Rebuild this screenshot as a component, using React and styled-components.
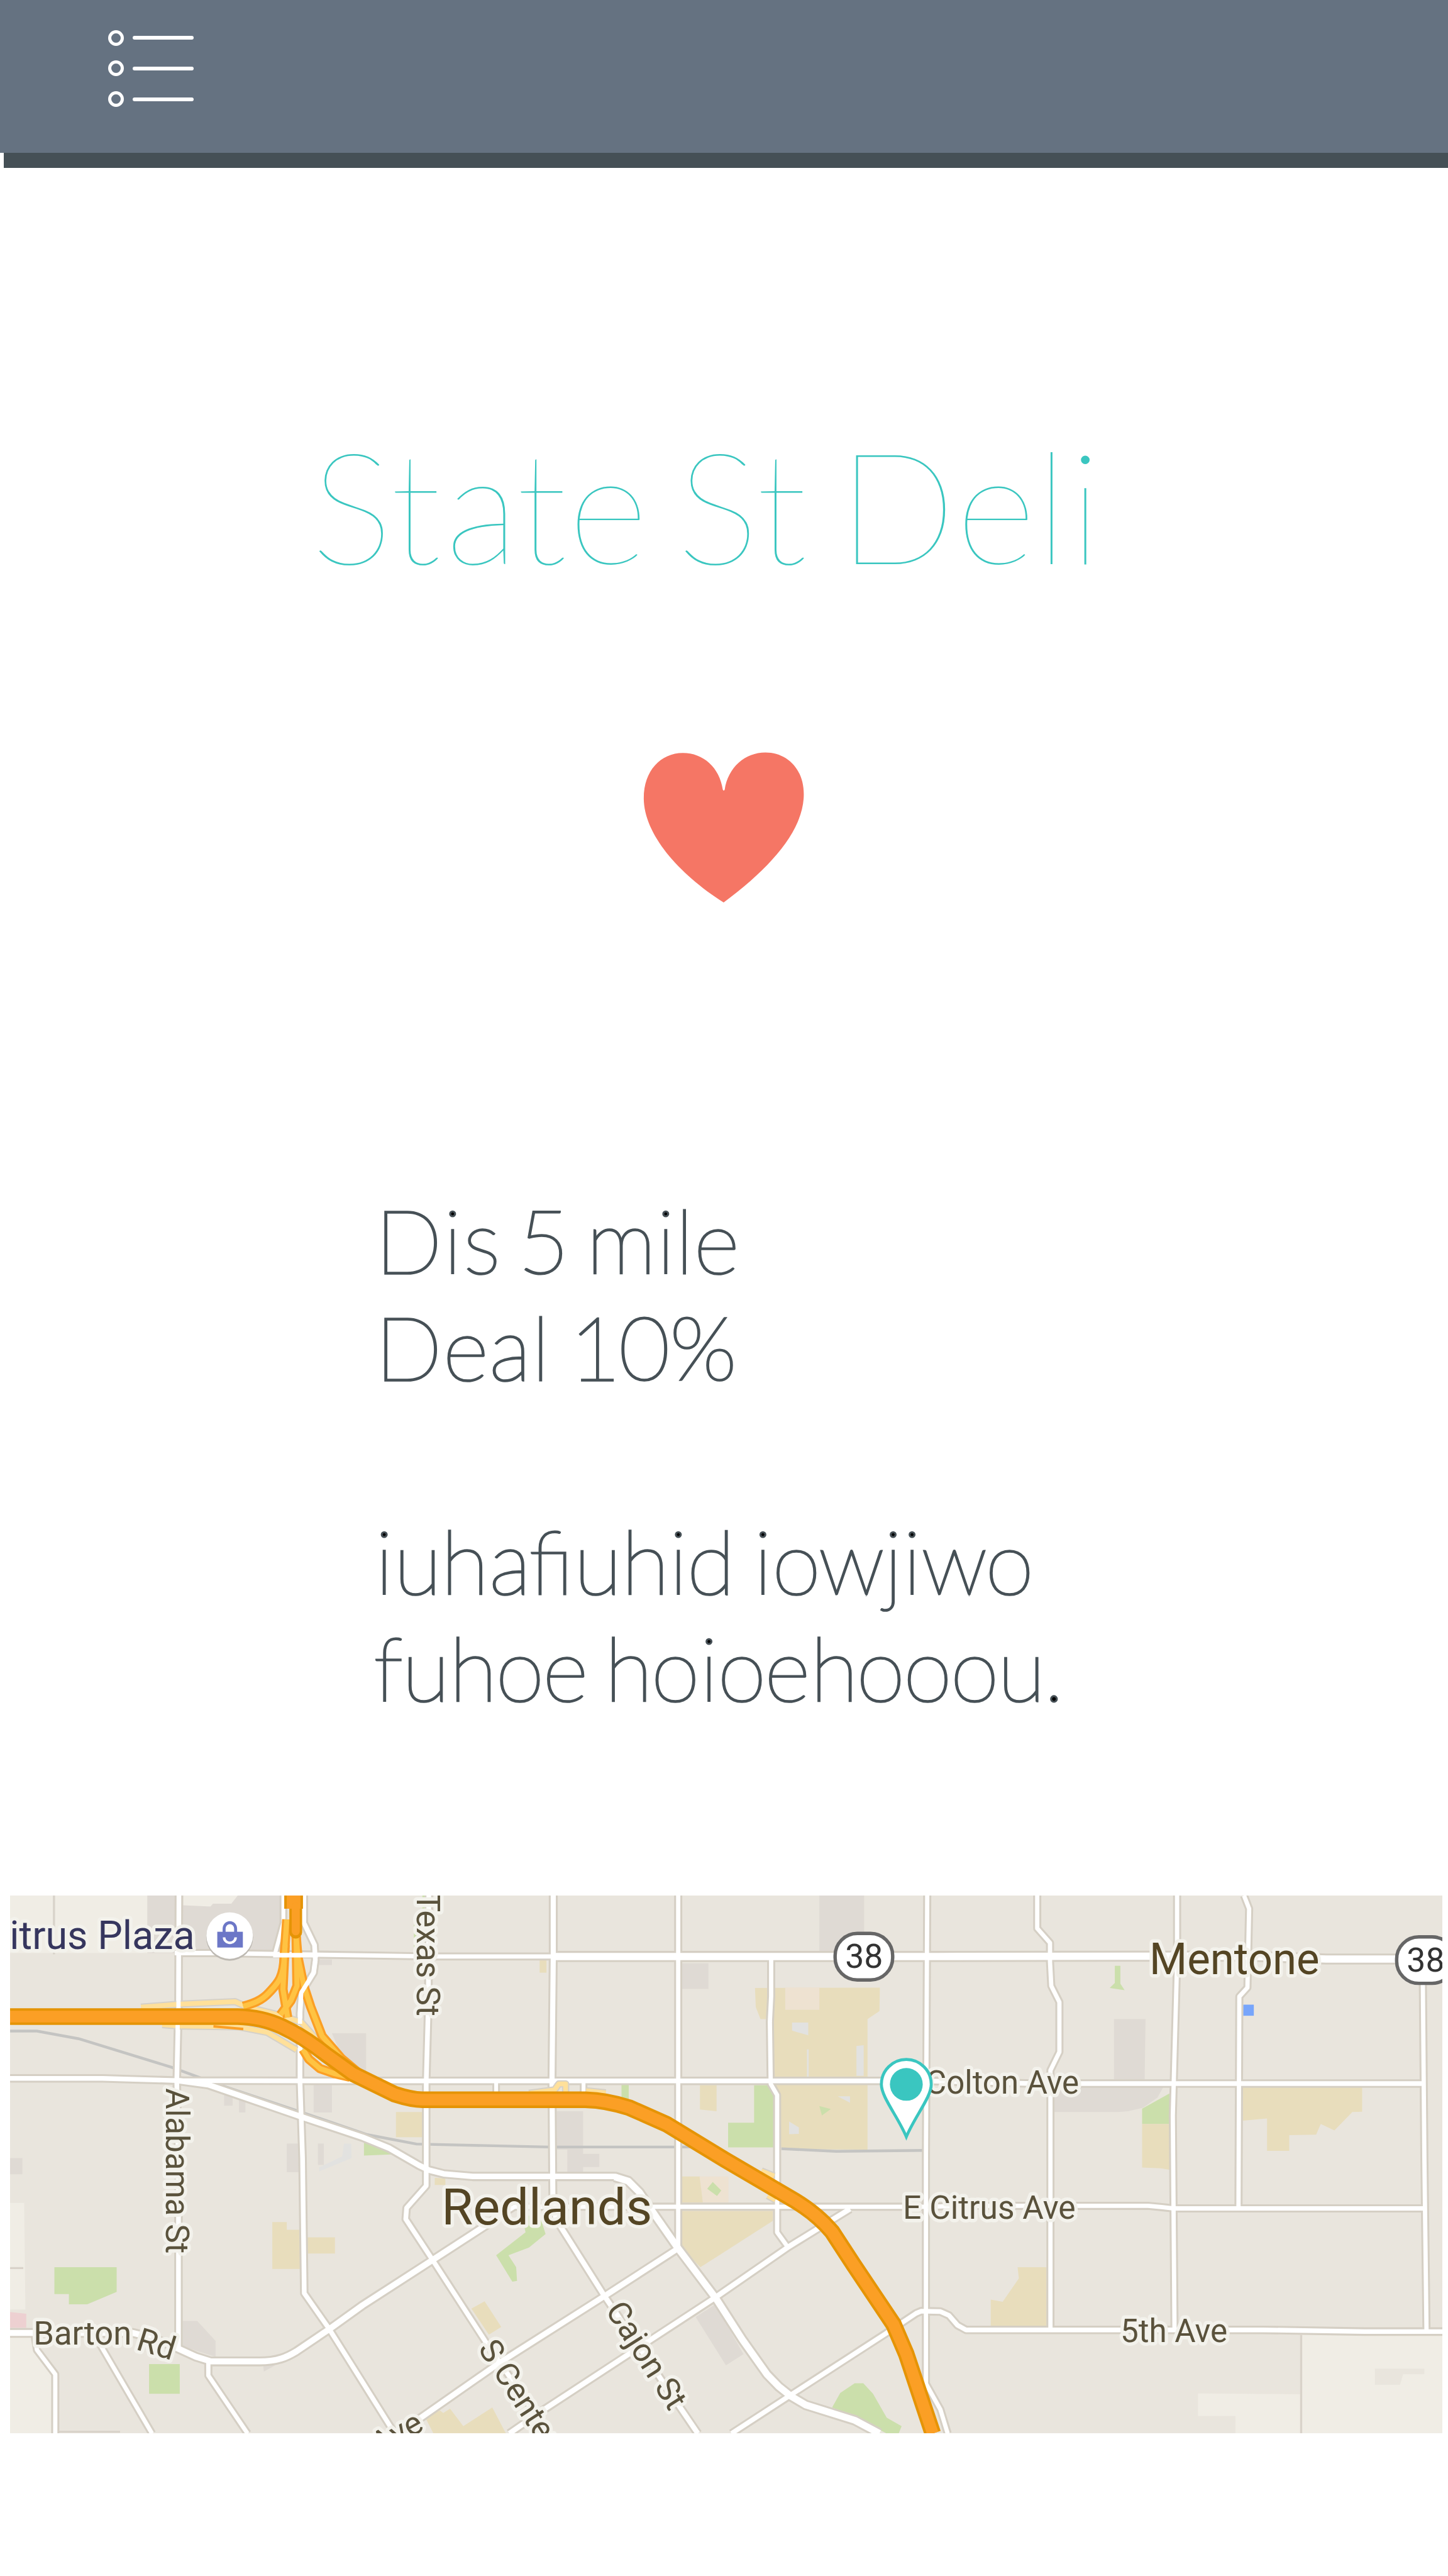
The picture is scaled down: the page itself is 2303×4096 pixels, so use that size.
import React from "react";
import styled, { createGlobalStyle } from "styled-components";

const GlobalStyle = createGlobalStyle`
  html, body { margin: 0; padding: 0; background: #ffffff; }
`;

const Screen = styled.main`
  display: flex;
  flex-direction: column;
  width: 2303px;
  height: 4096px;
  overflow: hidden;
  background: #ffffff;
  font-family: Lato, "Open Sans", sans-serif;
`;

const Header = styled.header`
  flex: none;
  height: 242.6px;
  background: #657281;
`;

const MenuButton = styled.button`
  display: flex;
  flex-direction: column;
  gap: 23.7px;
  margin: 0;
  padding: 47.8px 0 0 172px;
  border: 0;
  background: none;
`;

const MenuRow = styled.span`
  display: flex;
  align-items: center;
  gap: 20px;
`;

const Bullet = styled.span`
  box-sizing: border-box;
  width: 25px;
  height: 25px;
  border: 5.6px solid #ffffff;
  border-radius: 50%;
`;

const Dash = styled.span`
  width: 97px;
  height: 6px;
  margin-left: -6px;
  border-radius: 3px;
  background: #ffffff;
`;

const HeaderShade = styled.div`
  flex: none;
  height: 24.1px;
  margin-left: 6.4px;
  background: #455056;
`;

const Title = styled.h1`
  flex: none;
  margin: 390.9px 0 0 494.3px;
  font-size: 246.6px;
  line-height: 288px;
  font-weight: 100;
  color: #3ac6c0;
  white-space: pre;
`;

const Favourite = styled.svg`
  flex: none;
  width: 339px;
  height: 298.4px;
  margin: 220.8px 0 0 983.3px;
`;

const Details = styled.section`
  flex: none;
  margin: 421.1px 0 0 596.6px;
  font-size: 140.6px;
  line-height: 170px;
  font-weight: 100;
  color: #000000;
  -webkit-text-stroke: 3.1px #465056;
`;

const Line = styled.p`
  margin: 0 0 0 ${(p) => p.$shift || 0}px;
  height: 170px;
  white-space: pre;
`;

const Tracked = styled.span`
  letter-spacing: ${(p) => p.$t / 1000}em;
`;

const MapView = styled.svg`
  flex: none;
  display: block;
  width: 2278.6px;
  height: 855.4px;
  margin: 278.2px 0 0 15.6px;
  font-family: Roboto, "Open Sans", sans-serif;
`;

const MapLabel = styled.text`
  font-size: ${(p) => p.$size || 76}px;
  font-weight: 400;
  fill: ${(p) => p.$color || "#5a523c"};
  stroke: #f3f2ec;
  stroke-width: 16px;
  stroke-linejoin: round;
  paint-order: stroke;
`;

const ShieldText = styled.text`
  font-size: 79px;
  fill: #333333;
  text-anchor: middle;
`;

const titleRuns = [
  ["S", -17], ["t", 27], ["a", -17], ["t", 7], ["e"], [" ", -99],
  ["S", -18], ["t"], [" ", -84],
  ["D"], ["e", -3], ["l", 10], ["i"],
];

const detailLines = [
  [["D", 13], ["i", 18], ["s", 6], [" ", -90], ["5", 7], [" ", -101], ["m", 6], ["i", 2], ["l", 2], ["e"]],
  [["D", 8], ["e", 7], ["a", 5], ["l", 2], [" ", -64], ["1", -24], ["0", -4], ["%"]],
  [],
  [["i", 2], ["u", -8], ["h", 2], ["a", -24], ["fi"], ["u", -5], ["h", -3], ["i", -8], ["d", 7], [" ", -80],
    ["i", 1], ["o", -26], ["w", -6], ["j", 5], ["i", 1], ["w", -24], ["o"]],
  [["f", -11], ["u", -8], ["h", -19], ["o", -19], ["e", -19], [" ", -80], ["h", -19], ["o", 2], ["i", -8],
    ["o", -19], ["e", 2], ["h", -23], ["ooo", -18], ["u", -19], ["."]],
];

function Text({ runs }) {
  return runs.map(([chars, t], i) =>
    t ? <Tracked key={i} $t={t}>{chars}</Tracked> : <React.Fragment key={i}>{chars}</React.Fragment>
  );
}

const COLORS = {
  cream: "#f0ede5",
  gray: "#dfdad4",
  land: "#e9e5dd",
  sand: "#e8ddbc",
  blush: "#eee2d1",
  green: "#cbdfab",
  pink: "#edd0d1",
  pale: "#e2e2e0",
  blue: "#77a5fb",
};

const areas = [
  ["cream", "23,4444 345,4444 345,4579 23,4579"],
  ["gray", "345,4444 662,4444 662,4500 645,4579 345,4579"],
  ["cream", "429,4444 557,4444 542,4463 499,4463 493,4470 429,4467"],
  ["cream", "23,5165 56,5165 59,5415 23,5415"],
  ["pink", "23,5421 61,5425 61,5458 23,5458"],
  ["cream", "23,5476 80,5476 125,5565 125,5706 23,5706"],
  ["sand", "1770,4661 2063,4660 2062,4715 2034,4734 2034,5040 1832,5039 1812,4880 1805,4734 1783,4734 1772,4706"],
  ["blush", "1841,4660 1921,4660 1921,4712 1841,4712"],
  ["pale", "1857,4742 1895,4742 1895,4772 1857,4761"],
  ["pale", "2008,4797 2025,4795 2025,4867 2008,4867"],
  ["pale", "1892,4805 1896,4805 1896,4872 1892,4872"],
  ["pale", "1964,4915 1993,4915 1993,4930"],
  ["pale", "1850,4974 1873,4988 1873,5003 1850,5004"],
  ["green", "1921,4938 1948,4945 1927,4960"],
  ["green", "1768,4889 1813,4889 1813,5035 1707,5035 1707,4977 1768,4977"],
  ["gray", "1921,4444 2026,4444 2026,4574 1921,4574"],
  ["gray", "1597,4603 1661,4603 1661,4663 1597,4663"],
  ["sand", "1265,4596 1281,4596 1281,4625 1265,4625"],
  ["sand", "1641,4889 1680,4889 1680,4950 1641,4946"],
  ["green", "1457,4887 1474,4887 1474,4925 1457,4925"],
  ["gray", "1305,4950 1367,4950 1367,5050 1405,5050 1405,5081 1367,5081 1367,5094 1330,5094 1330,5040 1305,5040"],
  ["sand", "928,4952 990,4952 990,5011 928,5011"],
  ["green", "853,5018 895,5030 925,5051 853,5054"],
  ["green", "970,4512 1003,4512 1003,4580 970,4580"],
  ["green", "990,4444 1000,4444 1000,4512 990,4512"],
  ["gray", "778,4767 858,4767 858,4870 800,4820"],
  ["gray", "735,4888 778,4888 778,4953 735,4953"],
  ["gray", "672,5026 701,5026 701,5093 672,5093"],
  ["gray", "745,5026 759,5026 759,5076 745,5076"],
  ["pale", "748,5082 802,5056 806,5026 823,5026 824,5060 748,5091"],
  ["gray", "23,5060 52,5060 52,5098 23,5098"],
  ["gray", "525,4912 545,4912 545,4937 525,4937"],
  ["gray", "560,4925 575,4925 575,4953 560,4953"],
  ["gray", "746,4594 778,4594 778,4607 746,4607"],
  ["sand", "638,5210 672,5210 672,5228 703,5228 703,5320 638,5320"],
  ["sand", "719,5246 785,5246 785,5284 719,5284"],
  ["green", "127,5316 273,5316 273,5374 204,5403 161,5403 161,5379 127,5379"],
  ["green", "349,5543 421,5543 421,5613 349,5613"],
  ["gray", "428,5442 462,5442 505,5489 505,5526 428,5502"],
  ["gray", "617,5546 645,5546 618,5561"],
  ["sand", "1019,5106 1044,5108 1044,5123 1019,5123"],
  ["green", "1223,5195 1265,5195 1279,5238 1240,5270 1192,5288 1210,5316 1212,5348 1201,5350 1163,5288 1232,5234"],
  ["sand", "1105,5413 1136,5396 1175,5456 1146,5474"],
  ["sand", "996,5667 1031,5652 1039,5658 1055,5648 1086,5689 1154,5645 1186,5706 1016,5706"],
  ["sand", "1599,5103 1642,5103 1648,5164 1599,5164"],
  ["blush", "1640,5103 1708,5103 1708,5164 1648,5164"],
  ["green", "1671,5116 1691,5136 1681,5149 1658,5132"],
  ["sand", "1599,5184 1812,5184 1812,5207 1700,5279 1642,5316 1599,5272"],
  ["gray", "1631,5433 1677,5403 1743,5520 1702,5546"],
  ["sand", "2386,5316 2454,5316 2454,5456 2323,5456 2323,5392 2351,5397 2389,5342"],
  ["green", "2004,5588 2024,5588 2047,5613 2079,5669 2114,5689 2107,5706 2079,5706 2004,5667 1951,5645 1970,5611"],
  ["green", "2614,4609 2627,4609 2627,4651 2637,4666 2602,4661 2614,4649"],
  ["gray", "2612,4734 2686,4734 2684,4875 2612,4875"],
  ["gray", "2472,4891 2729,4891 2714,4918 2680,4942 2645,4950 2620,4952 2472,4952"],
  ["green", "2678,4944 2746,4906 2746,4980 2678,4980"],
  ["sand", "2678,4980 2746,4980 2746,5088 2722,5084 2678,5082"],
  ["blue", "2915,4700 2940,4700 2940,4726 2915,4726"],
  ["sand", "2914,4893 3194,4893 3194,4951 3171,4952 3129,4995 3097,4980 3086,5005 3023,5006 3023,5043 2971,5043 2971,4967 2914,4972"],
  ["cream", "3051,5466 3383,5466 3383,5706 2897,5706 2897,5665 2809,5665 2809,5612 3051,5614"],
  ["land", "3224,5554 3340,5554 3340,5567 3290,5567 3283,5592 3224,5592"],
];

const roads = [
  [10, "M419 4444 L418 4700 L414 4880 L418 5100 V5506"],
  [8, "M664 4444 V4508 L645 4578"],
  [10, "M712 4444 V4508 L737 4560 L739 4595 L735 4625 L706 4672 L703 4720 V4880 L709 5060 L713 5377 L771 5460 L850 5586 L925 5706"],
  [9, "M409 4579 H500 L900 4585 L1010 4587 H1300"],
  [16, "M1295 4587 H2200 L2920 4586 L3110 4593 H3383"],
  [10, "M23 4873 H240 L414 4878 L850 4879 H2170 L2420 4885 H3342"],
  [9, "M1180 5190 L1206 5174 H2180 L2250 5172 H2692 L2724 5175 L2752 5178 H3343"],
  [10, "M1005 4444 L1004 4700 L999 4880 V5125 L953 5177 L951 5203 L1014 5299 L1137 5489 L1286 5706"],
  [11, "M1297 4444 V4587 L1294 4880 L1296 5147 L1303 5203 L1418 5385 L1636 5706"],
  [9, "M1590 4444 V5268"],
  [9, "M1808 4587 V4680 L1805 4740 L1807 4886 L1822 4912 V5234 L1848 5270"],
  [9, "M2174 4444 L2171 5060 V5589 L2205 5650 L2222 5706"],
  [9, "M2432 4444 V4521 L2462 4555 V4600 L2465 4656 L2484 4694 V4811 L2463 4854 V5464"],
  [9, "M2760 4444 V4600 L2750 4960 L2754 5463"],
  [9, "M2917 4444 L2929 4475 L2925 4660 L2906 4681 L2904 5177"],
  [9, "M3336 4600 L3340 5060 L3345 5466"],
  [10, "M1715 5706 L1855 5615 L2076 5472 L2148 5424 L2160 5419 L2205 5420 L2225 5429 L2245 5452 L2265 5463 H2960 L3200 5467 H3383"],
  [11, "M1194 5706 L1275 5650 L1677 5387 L1849 5268 L1993 5179"],
  [12, "M940 5706 L982 5672 L1171 5540 L1418 5383 L1588 5273"],
  [13, "M23 5470 H310 L356 5481 L413 5505 L459 5526 L494 5537 H608 C650 5537 672 5527 695 5513 L772 5461 L850 5405 L1014 5299 L1185 5188"],
  [12, "M415 4878 L488 4888 L706 4963 L850 5011 L913 5037 L982 5077 L1005 5088 L1040 5097 L1108 5103 H1441 L1473 5114 L1499 5140 L1539 5199 L1590 5272"],
  [15, "M1441 5104 L1473 5114 L1499 5140 L1539 5199 L1590 5272 L1677 5387 L1740 5485 L1798 5567 L1826 5596 L1855 5619 L1889 5639 L2004 5675 L2062 5706"],
  [9, "M488 5540 V5570 L580 5706"],
  [9, "M230 5490 L356 5706"],
  [9, "M80 5472 L86 5510 L129 5567 V5706"],
  [8, "M1163 4883 V4910"],
  [8, "M1368 4883 V4910"],
];

const serviceLanes = [
  "M330 4706 L419 4699 L551 4693 L580 4706 L649 4723 L706 4741 L742 4782",
  "M380 4747 L419 4750 L560 4752 L626 4765 L695 4806",
  "M1240 4908 L1300 4900 L1310 4886 H1326 V4905",
  "M1374 4902 L1420 4907",
  "M1785 5090 L1815 5102",
  "M1800 5148 L1818 5158",
];

const ramps = [
  "M672 4500 L666 4588 C664 4640 650 4650 630 4672 C612 4692 590 4698 570 4704",
  "M668 4560 L663 4664 L674 4730",
  "M694 4540 L696 4656 L682 4690 L657 4724",
  "M694 4540 L698 4588 L712 4656 L728 4705 L755 4774 L800 4826 L850 4868",
  "M710 4805 L724 4828 L750 4850 L785 4862 L820 4870",
];

const freeway =
  "M23 4728 H557 C600 4729 630 4737 660 4751 C690 4765 730 4790 763 4816 L827 4862 L925 4910 C950 4918 970 4923 990 4923 H1372 C1410 4924 1440 4930 1476 4942 L1562 4980 L1700 5064 L1864 5160 C1900 5182 1930 5208 1951 5233 L2002 5311 L2095 5450 L2125 5520 L2187 5706";

const rail =
  "M23 4762 H86 L184 4780 L402 4847 L517 4889 L706 4952 L861 5005 L976 5027 L1286 5034 H1619 M1832 5038 L1960 5044 L2166 5042";

function Shield({ x, y }) {
  return (
    <g>
      <rect x={x + 4} y={y + 4} width="135" height="109" rx="52" fill="#ffffff" stroke="#666666" strokeWidth="8" />
      <ShieldText x={x + 72} y={y + 85}>38</ShieldText>
    </g>
  );
}

function CityMap() {
  return (
    <MapView viewBox="23 4444 3360 1262" preserveAspectRatio="none" role="img" aria-label="Map of Redlands">
      <rect x="23" y="4444" width="3360" height="1262" fill={COLORS.land} />
      {areas.map(([kind, points]) => (
        <polygon key={points} points={points} fill={COLORS[kind]} />
      ))}
      <path d="M126 4444 V4582 M23 5318 H54 M3051 5475 V5706 M138 5702 H281" stroke="#d9d3ca" strokeWidth="5" fill="none" />
      <path d={rail} stroke="#c4c4c2" strokeWidth="6.500" fill="none" />
      <g fill="none" strokeLinejoin="round">
        {roads.map(([w, d]) => (
          <path key={d} d={d} stroke="#d5cfc4" strokeWidth={w + 10} />
        ))}
        {roads.map(([w, d]) => (
          <path key={d} d={d} stroke="#ffffff" strokeWidth={w + 1} />
        ))}
        {serviceLanes.map((d) => (
          <path key={d} d={d} stroke="#d6d1c8" strokeWidth="17" />
        ))}
        {serviceLanes.map((d) => (
          <path key={d} d={d} stroke="#ffe09a" strokeWidth="11" />
        ))}
        <path d="M500 4751 L570 4757" stroke="#fb9f25" strokeWidth="6" />
        {ramps.map((d) => (
          <path key={d} d={d} stroke="#fb9f25" strokeWidth="22" />
        ))}
        {ramps.map((d) => (
          <path key={d} d={d} stroke="#ffc342" strokeWidth="12" />
        ))}
        <path d="M640 4584 H745" stroke="#ffffff" strokeWidth="11" />
        <path d="M739 4595 L735 4625 L706 4672 L703 4720 V4745 M418 4690 V4708 M416 4746 V4760" stroke="#ffffff" strokeWidth="10" />
        <path d="M688 4444 V4475" stroke="#e59406" strokeWidth="44" />
        <path d="M693 4470 V4530" stroke="#e59406" strokeWidth="30" strokeLinecap="round" />
        <path d="M688 4444 V4475" stroke="#fb9f25" strokeWidth="32" />
        <path d="M693 4470 V4528" stroke="#fb9f25" strokeWidth="19" strokeLinecap="round" />
        <path d={freeway} stroke="#e59406" strokeWidth="39" />
        <path d={freeway} stroke="#fb9f25" strokeWidth="27" />
      </g>

      <MapLabel x="22" y="4570" $size={94} $color="#36365e" textLength="434" lengthAdjust="spacingAndGlyphs">itrus Plaza</MapLabel>
      <circle cx="538" cy="4542" r="55" fill="#bdb9b2" />
      <circle cx="538" cy="4538" r="54.500" fill="#ffffff" />
      <path d="M525 4532 V4522 a13 14 0 0 1 27 0 V4532" fill="none" stroke="#6c77c7" strokeWidth="7" />
      <rect x="509" y="4529" width="60" height="37" fill="#6c77c7" />
      <path d="M525 4542 a13.500 13 0 0 0 27 0" fill="none" stroke="#ffffff" strokeWidth="6" />

      <MapLabel transform="translate(977 4437) rotate(90)" textLength="290" lengthAdjust="spacingAndGlyphs">Texas St</MapLabel>
      <MapLabel transform="translate(388 4896) rotate(90)" textLength="388" lengthAdjust="spacingAndGlyphs">Alabama St</MapLabel>
      <MapLabel x="2170" y="4909" textLength="360" lengthAdjust="spacingAndGlyphs">Colton Ave</MapLabel>
      <MapLabel x="2117" y="5202" textLength="405" lengthAdjust="spacingAndGlyphs">E Citrus Ave</MapLabel>
      <MapLabel x="2627" y="5492" textLength="251" lengthAdjust="spacingAndGlyphs">5th Ave</MapLabel>
      <MapLabel x="78" y="5497" textLength="230" lengthAdjust="spacingAndGlyphs">Barton</MapLabel>
      <MapLabel transform="translate(316 5508) rotate(17)">Rd</MapLabel>
      <MapLabel transform="translate(1119 5507) rotate(57)">S Center St</MapLabel>
      <MapLabel transform="translate(1418 5417) rotate(57.500)">Cajon St</MapLabel>
      <MapLabel transform="translate(997 5696) rotate(-30)" textAnchor="end">Ave</MapLabel>
      <MapLabel x="1035" y="5215" $size={117} $color="#544524" textLength="494" lengthAdjust="spacingAndGlyphs">Redlands</MapLabel>
      <MapLabel x="2695" y="4628" $size={104} $color="#544524" textLength="399" lengthAdjust="spacingAndGlyphs">Mentone</MapLabel>

      <Shield x={1954} y={4529} />
      <Shield x={3271} y={4537} />

      <path
        d="M2125 5010 C2105 4962 2066.500 4917 2066.500 4887 A58.500 58.500 0 0 1 2183.500 4887 C2183.500 4917 2145 4962 2125 5010 Z"
        fill="#ffffff"
        stroke="#3ac6c0"
        strokeWidth="7"
      />
      <circle cx="2125" cy="4887" r="38.500" fill="#3ac6c0" />
    </MapView>
  );
}

export default function App() {
  return (
    <Screen>
      <GlobalStyle />
      <Header>
        <MenuButton aria-label="Menu">
          {[0, 1, 2].map((i) => (
            <MenuRow key={i}>
              <Bullet />
              <Dash />
            </MenuRow>
          ))}
        </MenuButton>
      </Header>
      <HeaderShade />
      <Title>
        <Text runs={titleRuns} />
      </Title>
      <Favourite viewBox="0 0 500 440" aria-label="Favourite">
        <path
          fill="#f57665"
          d="M245.700 132 C238 80 200 46 152 46 C100 46 60.300 88 60.300 152 C60.300 235 140 328 247.700 396.700 C362 312 435.700 225 435.700 143 C435.700 82 395 45 345.700 45 C298 45 258 80 250.200 132 Q247.900 136.500 245.700 132 Z"
        />
      </Favourite>
      <Details>
        {detailLines.map((runs, i) => (
          <Line key={i} $shift={i === 4 ? -2.4 : 0}>
            <Text runs={runs} />
          </Line>
        ))}
      </Details>
      <CityMap />
    </Screen>
  );
}
